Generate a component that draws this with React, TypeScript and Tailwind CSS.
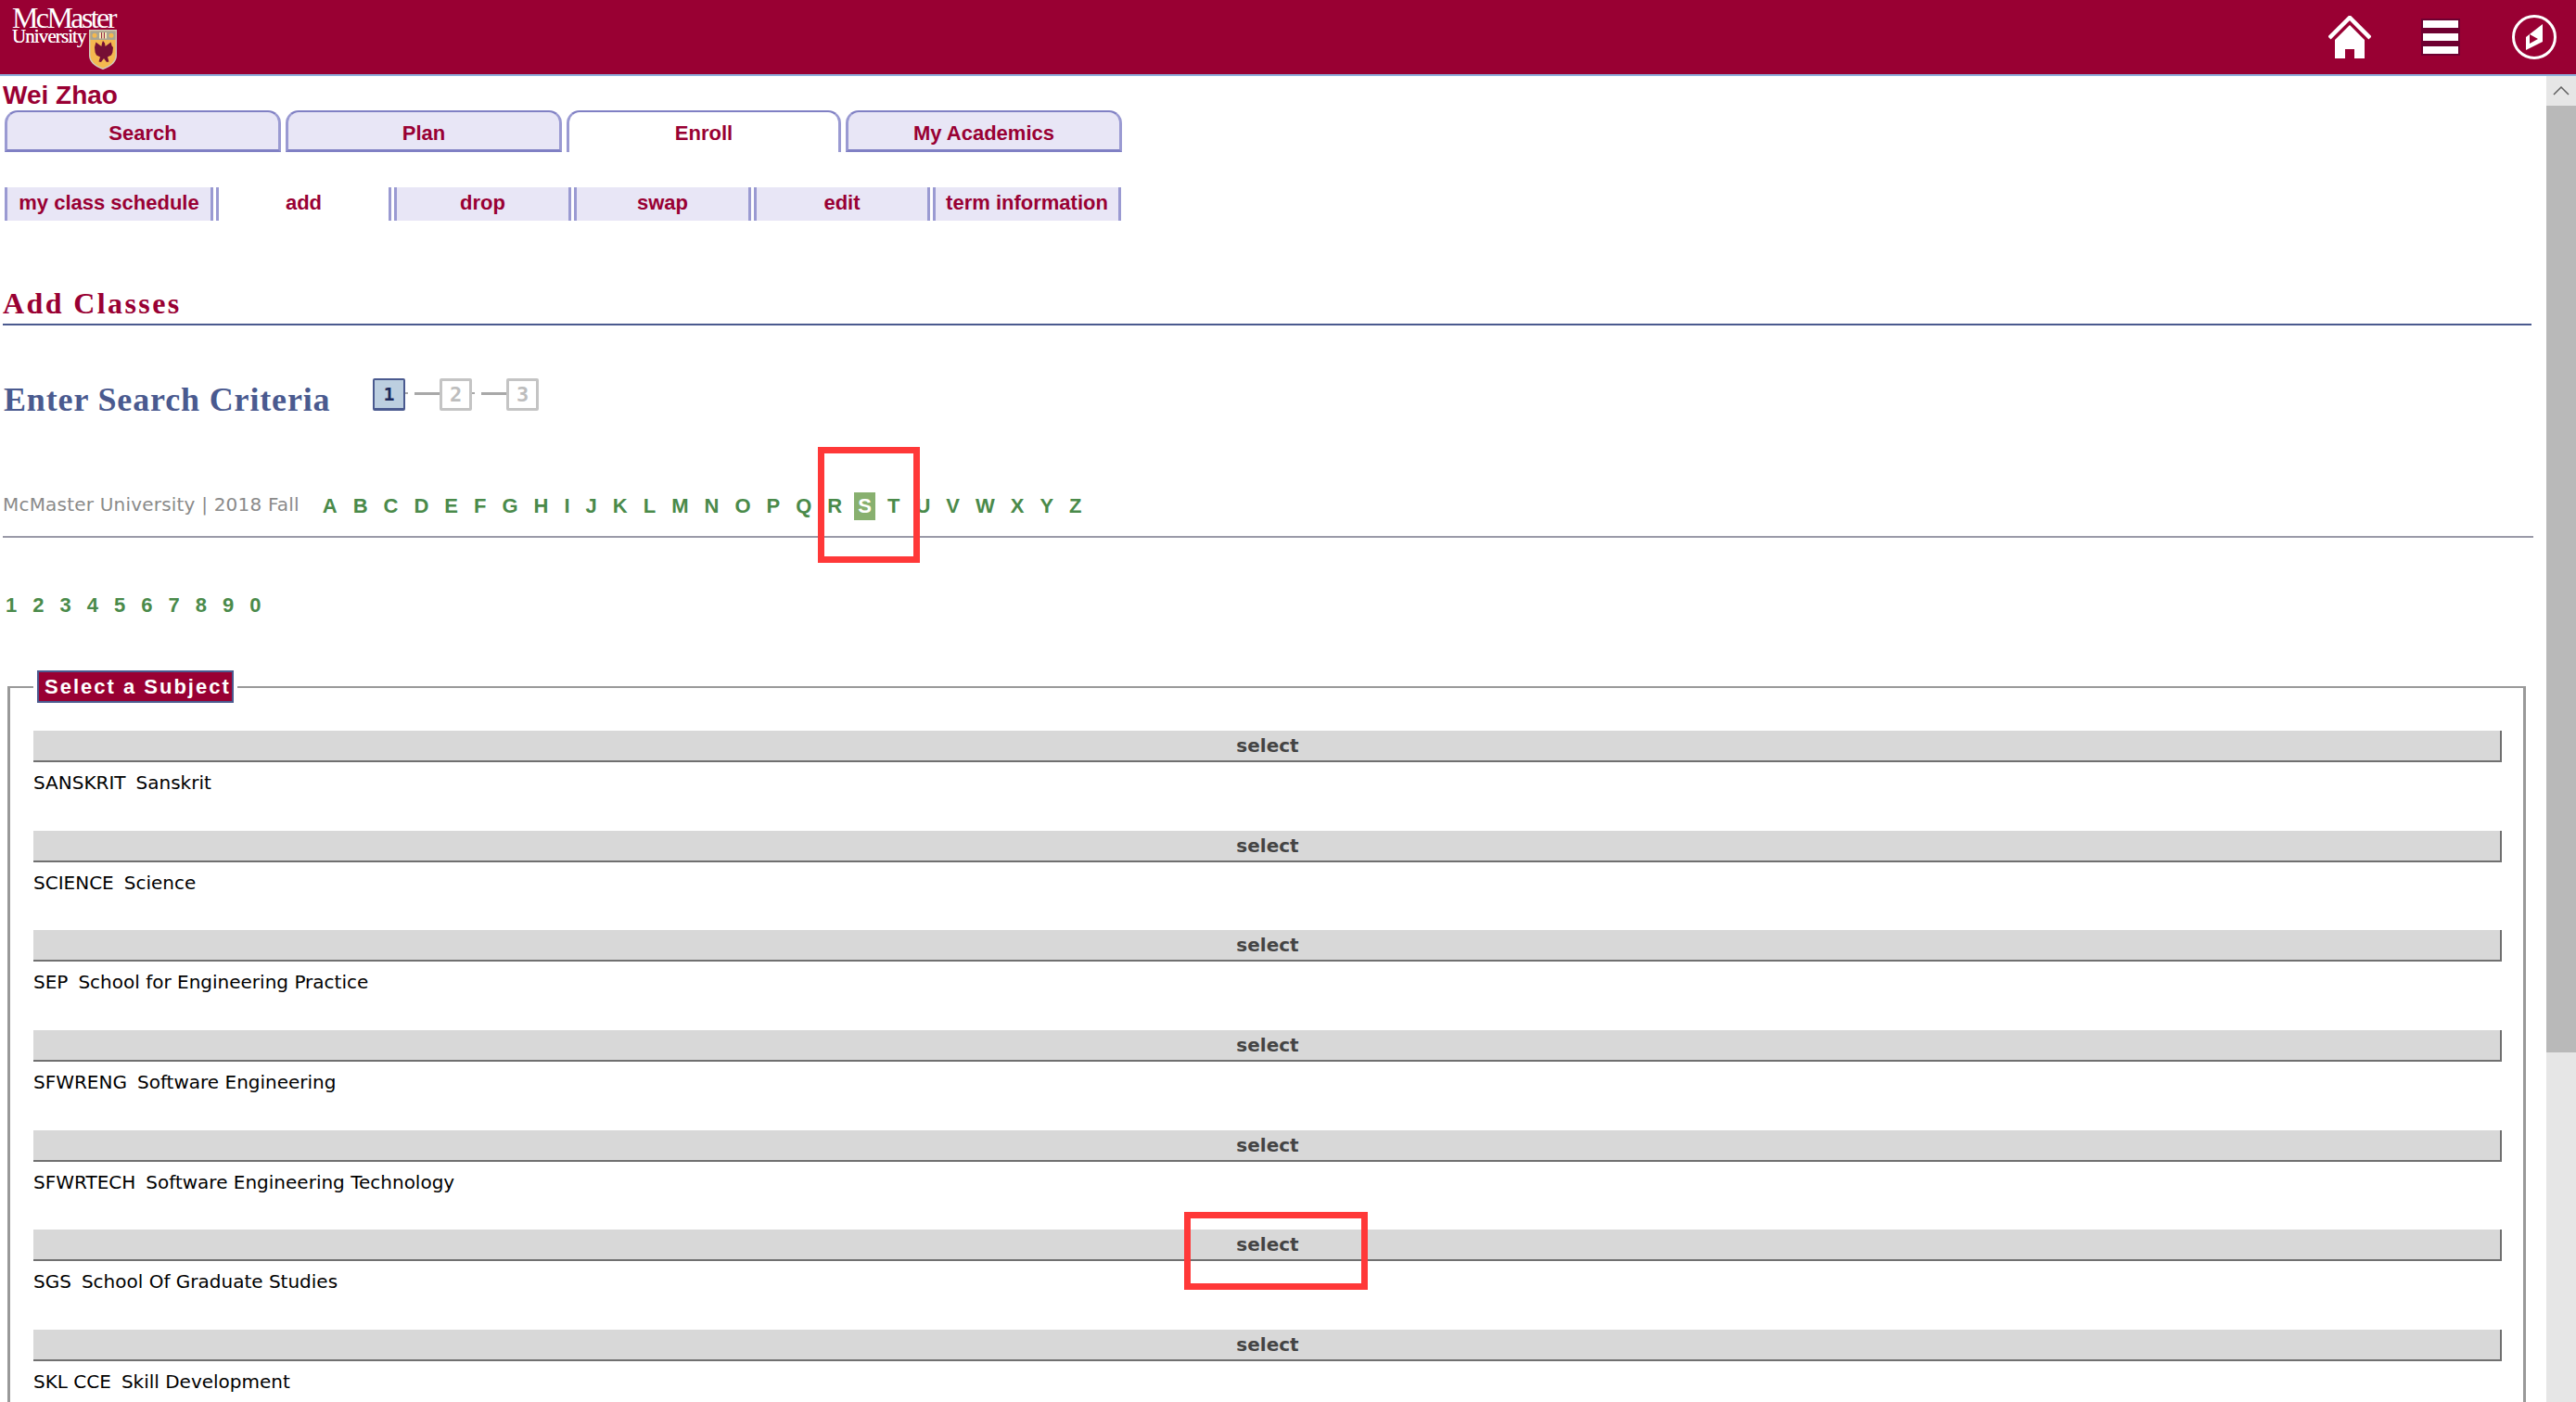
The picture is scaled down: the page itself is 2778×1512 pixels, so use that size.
const MAROON_TABS = ["Search", "Plan", "Enroll", "My Academics"];
const SUB_TABS = [
  { label: "my class schedule", width: "w-[225px]" },
  { label: "add", width: "w-[189px]", active: true },
  { label: "drop", width: "w-[191px]" },
  { label: "swap", width: "w-[191px]" },
  { label: "edit", width: "w-[190px]" },
  { label: "term information", width: "w-[203px]" },
];
const LETTERS = "ABCDEFGHIJKLMNOPQRSTUVWXYZ".split("");
const DIGITS = "1234567890".split("");
const SUBJECTS = [
  { code: "SANSKRIT", name: "Sanskrit" },
  { code: "SCIENCE", name: "Science" },
  { code: "SEP", name: "School for Engineering Practice" },
  { code: "SFWRENG", name: "Software Engineering" },
  { code: "SFWRTECH", name: "Software Engineering Technology" },
  { code: "SGS", name: "School Of Graduate Studies" },
  { code: "SKL CCE", name: "Skill Development" },
];

function Crest() {
  return (
    <svg width="30" height="43" viewBox="0 0 30 43" className="shrink-0">
      <path d="M.7.7h28.600v27c0 7-6 11.500-14.300 14.600C6.700 39.200.7 34.700.7 27.700z" fill="#f4b84f" stroke="#cfcabd" strokeWidth="1.400" />
      <rect x="1.400" y="1.400" width="27.200" height="9.600" fill="#a9a493" />
      <rect x="11" y="3" width="8" height="6.500" fill="#f7e9b8" />
      <path d="M13.600 3v6.500M16.400 3v6.500" stroke="#8a1a3a" strokeWidth="1" />
      <circle cx="6" cy="6.200" r="2.500" fill="#f4b84f" />
      <circle cx="24" cy="6.200" r="2.500" fill="#f4b84f" />
      <path d="M15 12l2 2.500.6 3.500 6-4.500 1 4 1.400 1.500-.6 5.500-1.400 3-4 2 1.500 5-2.500.6-3-4-3 4-2.500-.6 1.500-5-4-2-1.400-3-.6-5.500L6.400 17.500l1-4 6 4.500.6-3.500z" fill="#761034" />
    </svg>
  );
}

function Logo() {
  return (
    <div className="ml-[13px] flex h-[80px] w-[113px] flex-col pt-[4px] text-white [font-family:'Liberation_Serif',serif]">
      <div className="h-[28px] text-[32px] leading-[30px] tracking-[-2.6px] whitespace-nowrap">McMaster</div>
      <div className="flex items-start justify-between">
        <span className="text-[21px] leading-[14px] tracking-[-0.9px] [text-shadow:0_0_0.5px_#fff]">University</span>
        <Crest />
      </div>
    </div>
  );
}

function HeaderIcons() {
  return (
    <div className="flex items-center">
      <svg width="46" height="46" viewBox="0 0 46 46" className="mr-[54px]">
        <path d="M1 24 23 2l22 22" fill="none" stroke="#fff" strokeWidth="4.500" />
        <path d="M7 26 23 10l16 16v20H28V36H18v10H7z" fill="#fff" />
      </svg>
      <div className="mr-[55px] flex h-[40px] w-[42px] flex-col justify-between bg-[#6e0030] p-[2px]">
        <span className="h-[8px] bg-white" />
        <span className="h-[8px] bg-white" />
        <span className="h-[8px] bg-white" />
      </div>
      <svg width="50" height="50" viewBox="0 0 50 50" className="mr-[20px]">
        <circle cx="25" cy="25" r="22.500" fill="none" stroke="#fff" strokeWidth="3" />
        <path d="M34 11v19l-18 9V25z" fill="#fff" />
        <path d="M20 22l9 5-9 5z" fill="#990033" />
      </svg>
    </div>
  );
}

function Tab({ label, active }: { label: string; active: boolean }) {
  return (
    <div
      className={
        active
          ? "flex h-[45px] w-[296px] items-center justify-center rounded-t-[14px] border-x-[3px] border-t-[2px] border-x-[#9a9ad2] border-t-[#8080c4] bg-white pt-[2px] text-[22px] font-bold text-[#990033]"
          : "flex h-[45px] w-[298px] items-center justify-center rounded-t-[14px] border-x-[3px] border-t-[2px] border-b-[3px] border-x-[#9a9ad2] border-t-[#8080c4] border-b-[#8080c4] bg-[#e8e6f6] pt-[4px] text-[22px] font-bold text-[#990033]"
      }
    >
      {label}
    </div>
  );
}

function StepBox({ digit, active }: { digit: string; active?: boolean }) {
  return (
    <div
      className={
        active
          ? "flex h-[35px] w-[35px] items-center justify-center rounded-[2px] border-2 border-b-[3px] border-[#4a5a8f] bg-[#bccfe0] text-[20px] font-bold text-[#1d2a5c] [font-family:'DejaVu_Sans_Mono',monospace]"
          : "flex h-[35px] w-[35px] items-center justify-center rounded-[2px] border-[3px] border-[#c4c4c4] bg-white text-[22px] font-bold text-[#bdbdbd] [font-family:'DejaVu_Sans_Mono',monospace]"
      }
    >
      {digit}
    </div>
  );
}

function StepLine() {
  return (
    <div className="mb-[3px] flex w-[37px] items-center justify-between">
      <span className="h-[2px] w-[3px] bg-[#a8a8a8]" />
      <span className="h-[3px] w-[27px] bg-[#a8a8a8]" />
    </div>
  );
}

function GreenLink({ value, current }: { value: string; current?: boolean }) {
  return (
    <span
      className={
        current
          ? "mr-[9px] inline-block bg-[#88b06f] px-[4px] leading-[30px] text-white"
          : "mr-[9px] inline-block px-[4px] leading-[30px] text-[#4a8a4a]"
      }
    >
      {value}
    </span>
  );
}

function SubjectRow({ code, name }: { code: string; name: string }) {
  return (
    <div className="h-[107.65px] shrink-0">
      <div className="flex h-[34px] items-center justify-center border-r-2 border-b-2 border-[#707070] bg-[#d8d8d8] pl-[2px] text-[20px] font-bold text-[#444] [font-family:'DejaVu_Sans',sans-serif]">
        select
      </div>
      <div className="mt-[9px] text-[20px] leading-[26px] text-black [font-family:'DejaVu_Sans',sans-serif]">
        <span className="mr-[11px]">{code}</span>
        {name}
      </div>
    </div>
  );
}

export default function App() {
  return (
    <div className="relative h-screen w-full overflow-hidden bg-white [font-family:'Liberation_Sans',Arial,sans-serif]">
      <header className="flex h-[82px] items-center justify-between border-b-2 border-[#8fb0dc] bg-[#990033]">
        <Logo />
        <HeaderIcons />
      </header>

      <div className="flex h-[1430px]">
        <main className="min-w-0 flex-1 overflow-hidden">
          <h1 className="ml-[3px] h-[37px] pt-[5px] text-[28px] leading-[32px] font-bold text-[#990033]">Wei Zhao</h1>

          <nav className="ml-[5px] flex gap-[5px]">
            {MAROON_TABS.map((t) => (
              <Tab key={t} label={t} active={t === "Enroll"} />
            ))}
          </nav>

          <nav className="mt-[38px] ml-[5px] flex gap-[3px]">
            {SUB_TABS.map((t) => (
              <div
                key={t.label}
                className={`flex h-[36px] items-center justify-center border-x-[3px] border-[#9a9ad2] pb-[4px] text-[22px] font-bold text-[#990033] ${t.width} ${
                  t.active ? "bg-white" : "bg-[#e8e6f6]"
                }`}
              >
                {t.label}
              </div>
            ))}
          </nav>

          <h2 className="mt-[72px] ml-[3px] w-[2727px] border-b-2 border-[#4a5a8f] pb-[5px] text-[32px] leading-[34px] font-bold tracking-[2.4px] text-[#990033] [font-family:'Liberation_Serif',serif]">
            Add Classes
          </h2>

          <div className="mt-[56px] flex h-[37px] items-center">
            <h3 className="mt-[10px] ml-[4px] w-[398px] text-[36px] leading-[40px] font-bold tracking-[0.85px] text-[#4a5a8f] [font-family:'Liberation_Serif',serif]">
              Enter Search Criteria
            </h3>
            <StepBox digit="1" active />
            <StepLine />
            <StepBox digit="2" />
            <StepLine />
            <StepBox digit="3" />
          </div>

          <div className="mt-[85px] ml-[3px] flex h-[51px] w-[2729px] items-start border-b-2 border-[#9a9aa8]">
            <span className="mr-[21px] text-[20px] leading-[30px] tracking-[0.2px] text-[#8a8a8a] [font-family:'DejaVu_Sans',sans-serif]">
              McMaster University | 2018 Fall
            </span>
            <div className="text-[22px] font-bold">
              {LETTERS.map((l) => (
                <GreenLink key={l} value={l} current={l === "S"} />
              ))}
            </div>
          </div>

          <div className="mt-[56px] ml-[2px] text-[22px] font-bold">
            {DIGITS.map((d) => (
              <GreenLink key={d} value={d} />
            ))}
          </div>

          <fieldset className="mt-[54px] ml-[8px] h-[900px] w-[2716px] border-[3px] border-t-2 border-[#999] pr-[23px] pl-[25px]">
            <legend className="px-[4px]">
              <span className="block h-[35px] border-2 border-[#4a5a8f] bg-[#990033] pr-[1px] pl-[6px] text-[22px] leading-[31px] font-bold tracking-[2px] text-white">
                Select a Subject
              </span>
            </legend>
            <div className="mt-[30px] flex flex-col">
              {SUBJECTS.map((s) => (
                <SubjectRow key={s.code} code={s.code} name={s.name} />
              ))}
            </div>
          </fieldset>
        </main>

        <aside className="flex w-[32px] shrink-0 flex-col bg-[#e6e6e6]">
          <div className="flex h-[32px] items-center justify-center bg-[#e6e6e6]">
            <svg width="18" height="10" viewBox="0 0 18 10">
              <path d="M1 9l8-8 8 8" fill="none" stroke="#606060" strokeWidth="1.500" />
            </svg>
          </div>
          <div className="h-[1021px] bg-[#b9b9b9]" />
        </aside>
      </div>

      <div className="absolute top-[482px] left-[882px] h-[125px] w-[110px] border-[7px] border-[#ff3838]" />
      <div className="absolute top-[1307px] left-[1277px] h-[84px] w-[198px] border-[7px] border-[#ff3838]" />
    </div>
  );
}
